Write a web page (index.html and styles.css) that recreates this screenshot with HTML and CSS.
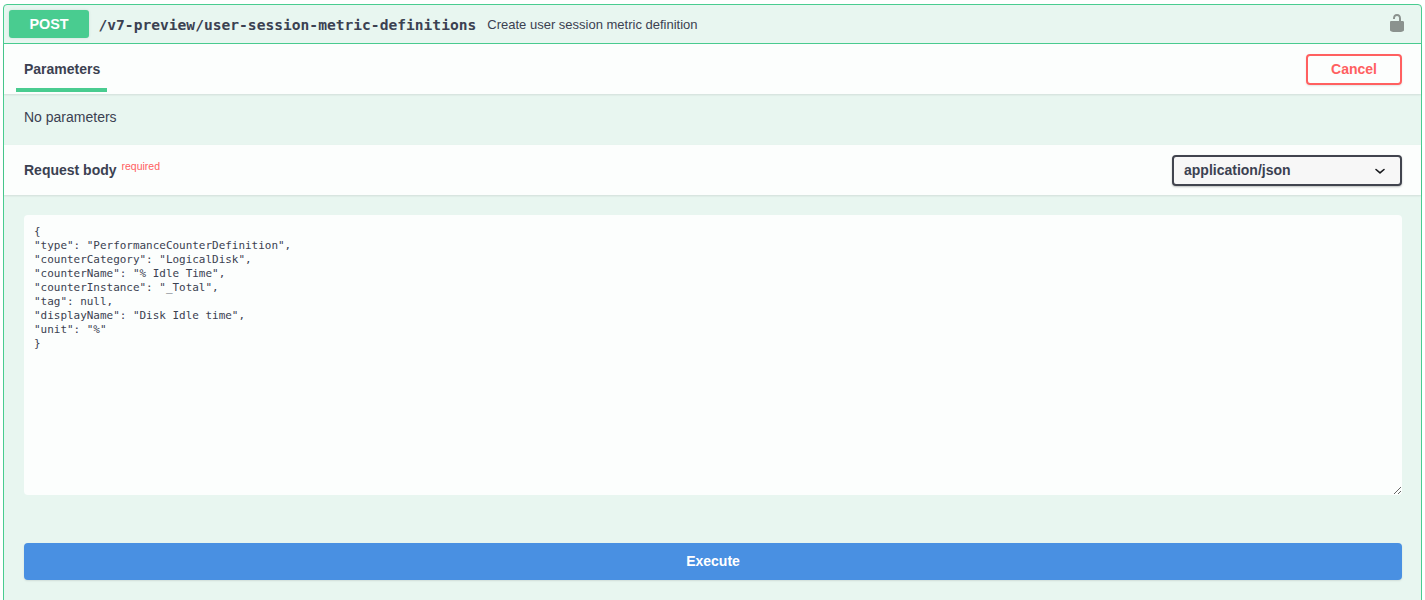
FILE: index.html
```html
<!DOCTYPE html>
<html lang="en">
<head>
<meta charset="utf-8">
<title>Create user session metric definition</title>
<link rel="stylesheet" href="styles.css">
</head>
<body>
<div class="opblock">
  <div class="summary">
    <span class="method">POST</span>
    <span class="path">/v7-preview/user-session-metric-definitions</span>
    <span class="desc">Create user session metric definition</span>
    <svg class="lock" width="20" height="20" viewBox="0 0 20 20" aria-hidden="true"><path fill="#8b928e" d="M15.8 8H14V5.6C14 2.703 12.665 1 10 1 7.334 1 6 2.703 6 5.6V6h2v-.801C8 3.754 8.797 3 10 3c1.203 0 2 .754 2 2.199V8H4c-.553 0-1 .646-1 1.199V17c0 .549.428 1.139.951 1.307l1.197.387C5.672 18.861 6.55 19 7.1 19h5.8c.549 0 1.428-.139 1.951-.307l1.196-.387c.524-.167.953-.757.953-1.306V9.199C17 8.646 16.352 8 15.8 8z"/></svg>
  </div>
  <div class="section-head tabs-head">
    <div class="tab">Parameters</div>
    <button class="cancel" type="button">Cancel</button>
  </div>
  <div class="no-params">No parameters</div>
  <div class="section-head body-head">
    <div class="body-title">Request body <span class="required">required</span></div>
    <div class="select">
      <span class="select-value">application/json</span>
      <svg class="chevron" width="20" height="20" viewBox="0 0 20 20" aria-hidden="true"><path fill="none" stroke="#17181c" stroke-width="1.6" stroke-linecap="round" stroke-linejoin="round" d="M6 8.5l4 3.4 4-3.4"/></svg>
    </div>
  </div>
  <div class="body-area">
    <textarea class="code" spellcheck="false">{
"type": "PerformanceCounterDefinition",
"counterCategory": "LogicalDisk",
"counterName": "% Idle Time",
"counterInstance": "_Total",
"tag": null,
"displayName": "Disk Idle time",
"unit": "%"
}</textarea>
  </div>
  <div class="actions">
    <button class="execute" type="button">Execute</button>
  </div>
</div>
</body>
</html>
```
FILE: styles.css
```css
* { box-sizing: border-box; }
html, body { margin: 0; height: 600px; overflow: hidden; background: #fff; }
body { padding: 4px 3px 0; font-family: "Liberation Sans", Arial, sans-serif; color: #3b4151; }
.opblock { height: 640px; border: 1px solid #49cc90; border-radius: 4px; background: #e8f6f0; }
.summary { height: 39px; display: flex; align-items: center; padding: 0 16px 0 5px; border-bottom: 1px solid #49cc90; }
.method { width: 80px; height: 28px; line-height: 28px; text-align: center; background: #49cc90; color: #fff; font-size: 14.4px; font-weight: 700; border-radius: 3px; box-shadow: 0 0 3px rgba(0,0,0,.1); }
.path { margin-left: 9.5px; font-family: "DejaVu Sans Mono", monospace; font-size: 14.6px; font-weight: 700; color: #3b4151; }
.desc { margin-left: 11px; font-size: 13px; color: #3b4151; flex: 1; }
.lock { margin-top: -3px; margin-right: -2px; }
.section-head { display: flex; justify-content: space-between; background: #fcfefd; box-shadow: 0 1px 2px rgba(0,0,0,.1); }
.tabs-head { height: 50px; padding: 10px 19px 0 12px; position: relative; align-items: flex-start; }
.tab { width: 91px; height: 38px; padding: 7px 8px 0; font-size: 14px; font-weight: 700; border-bottom: 4px solid #49cc90; color: #3b4151; line-height: 16px; }
.cancel { width: 96px; height: 31px; padding: 0 0 2px; border: 2px solid #ff6060; border-radius: 4px; background: transparent; color: #ff6060; font: 700 14px "Liberation Sans", Arial, sans-serif; box-shadow: 0 1px 2px rgba(0,0,0,.1); }
.no-params { height: 51px; padding: 15px 20px 0; font-size: 14px; line-height: 17px; color: #3b4151; }
.body-head { height: 50px; padding: 10px 19px 0 20px; align-items: flex-start; }
.body-title { font-size: 14px; font-weight: 700; padding-top: 7px; line-height: 17px; }
.required { position: relative; top: -5px; margin-left: 1px; font-size: 10.5px; font-weight: 400; color: #ff6060; }
.select { width: 230px; height: 31px; display: flex; align-items: center; justify-content: space-between; padding: 0 10px 0 10px; border: 2px solid #41444e; border-radius: 4px; background: #f7f7f7; font-size: 14px; font-weight: 700; color: #3b4151; box-shadow: 0 1px 2px rgba(0,0,0,.25); }
.select-value { padding-bottom: 2px; }
.body-area { padding: 20px 19px 0 20px; }
.code { display: block; width: 100%; height: 280px; padding: 10px 10px; border: 0; border-radius: 4px; outline: 0; background: #fcfefd; font-family: "DejaVu Sans Mono", monospace; font-size: 10.96px; line-height: 14px; color: #3b4151; }
.actions { padding: 48px 19px 0 20px; }
.execute { display: block; width: 100%; height: 37px; padding: 0 0 2px; border: 0; border-radius: 4px; background: #4990e2; color: #fff; font: 700 14px "Liberation Sans", Arial, sans-serif; box-shadow: 0 1px 2px rgba(0,0,0,.1); }
```
